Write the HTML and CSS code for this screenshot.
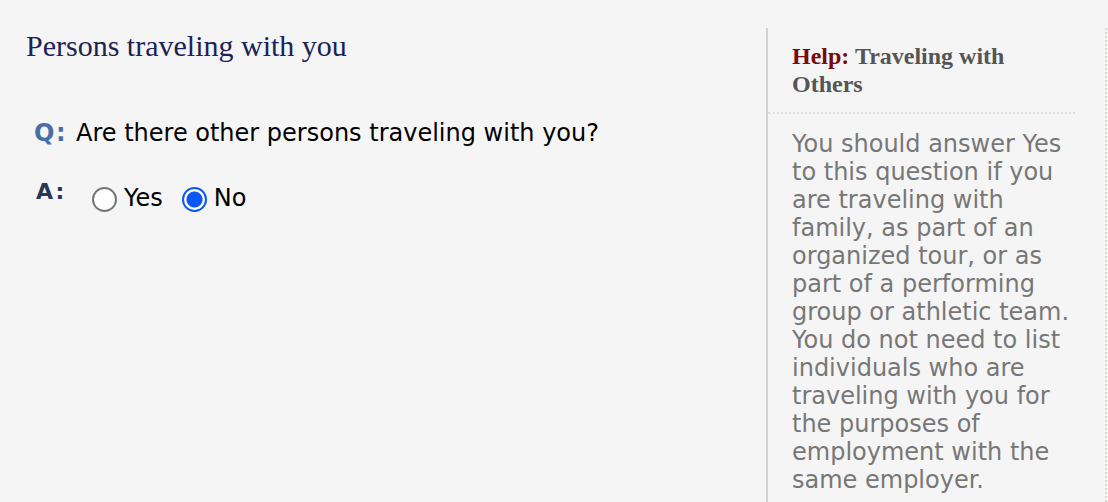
FILE: index.html
```html
<!DOCTYPE html>
<html>
<head>
<meta charset="utf-8">
<link rel="stylesheet" href="styles.css">
</head>
<body>
<div class="page">
  <main class="main">
    <h1 class="title">Persons traveling with you</h1>
    <div class="qa">
      <div class="row q-row">
        <span class="label label-q">Q:</span>
        <span class="question">Are there other persons traveling with you?</span>
      </div>
      <div class="row a-row">
        <span class="label label-a">A:</span>
        <label class="opt"><input type="radio" name="others" class="radio"><span>Yes</span></label>
        <label class="opt"><input type="radio" name="others" class="radio" checked><span>No</span></label>
      </div>
    </div>
  </main>
  <aside class="help">
    <h2 class="help-title"><span class="help-tag">Help:</span> <span class="help-name">Traveling with Others</span></h2>
    <p class="help-text">You should answer Yes to this question if you are traveling with family, as part of an organized tour, or as part of a performing group or athletic team. You do not need to list individuals who are traveling with you for the purposes of employment with the same employer.</p>
  </aside>
</div>
</body>
</html>
```
FILE: styles.css
```css
html, body {
  margin: 0;
  padding: 0;
  background: #f5f5f5;
}
body {
  font-family: "DejaVu Sans", Verdana, sans-serif;
  height: 502px;
  overflow: hidden;
}
.page {
  display: flex;
  align-items: stretch;
  height: 502px;
}
.main {
  width: 766px;
  flex: none;
}
.title {
  margin: 28px 0 0 26px;
  font-family: "Liberation Serif", "Times New Roman", serif;
  font-weight: normal;
  font-size: 30px;
  line-height: 36px;
  color: #1b2356;
}
.qa {
  margin: 51px 0 0 34px;
}
.row {
  display: flex;
  align-items: center;
  height: 36px;
}
.a-row {
  margin-top: 29px;
}
.label {
  font-family: "DejaVu Sans", sans-serif;
  font-weight: bold;
  line-height: 28px;
}
.label-q {
  color: #4a6ea8;
  width: 42px;
  font-size: 24px;
  letter-spacing: 1.5px;
}
.label-a {
  color: #27365a;
  width: 56px;
  margin-left: 2px;
  margin-top: -12px;
  font-size: 22px;
  letter-spacing: 2px;
}
.question {
  font-size: 24px;
  color: #000;
}
.opt {
  display: flex;
  align-items: center;
  margin-right: 19px;
  font-size: 24px;
  color: #000;
}
.radio {
  appearance: none;
  -webkit-appearance: none;
  width: 25px;
  height: 25px;
  margin: 2px 7px 0 0;
  border: 2px solid #767676;
  border-radius: 50%;
  background: #fff;
  box-sizing: border-box;
}
.radio:checked {
  border-color: #0b57f5;
  background: radial-gradient(circle, #0b57f5 0 7.5px, #fff 8.5px);
}
.help {
  flex: 1;
  border-left: 2px solid #d5d0d0;
  border-right: 2px dotted #e0d8c4;
  margin: 28px 1px 0 0;
}
.help-title {
  margin: 14px 30px 0 0;
  padding: 0 0 14px 24px;
  font-family: "Liberation Serif", "Times New Roman", serif;
  font-weight: bold;
  font-size: 24px;
  line-height: 28px;
  color: #555;
  border-bottom: 2px dotted #dcdcdc;
}
.help-tag {
  color: #7a0a0a;
}
.help-name {
  color: #555;
}
.help-text {
  margin: 16px 26px 0 24px;
  font-size: 24px;
  line-height: 28px;
  color: #777;
}
```
